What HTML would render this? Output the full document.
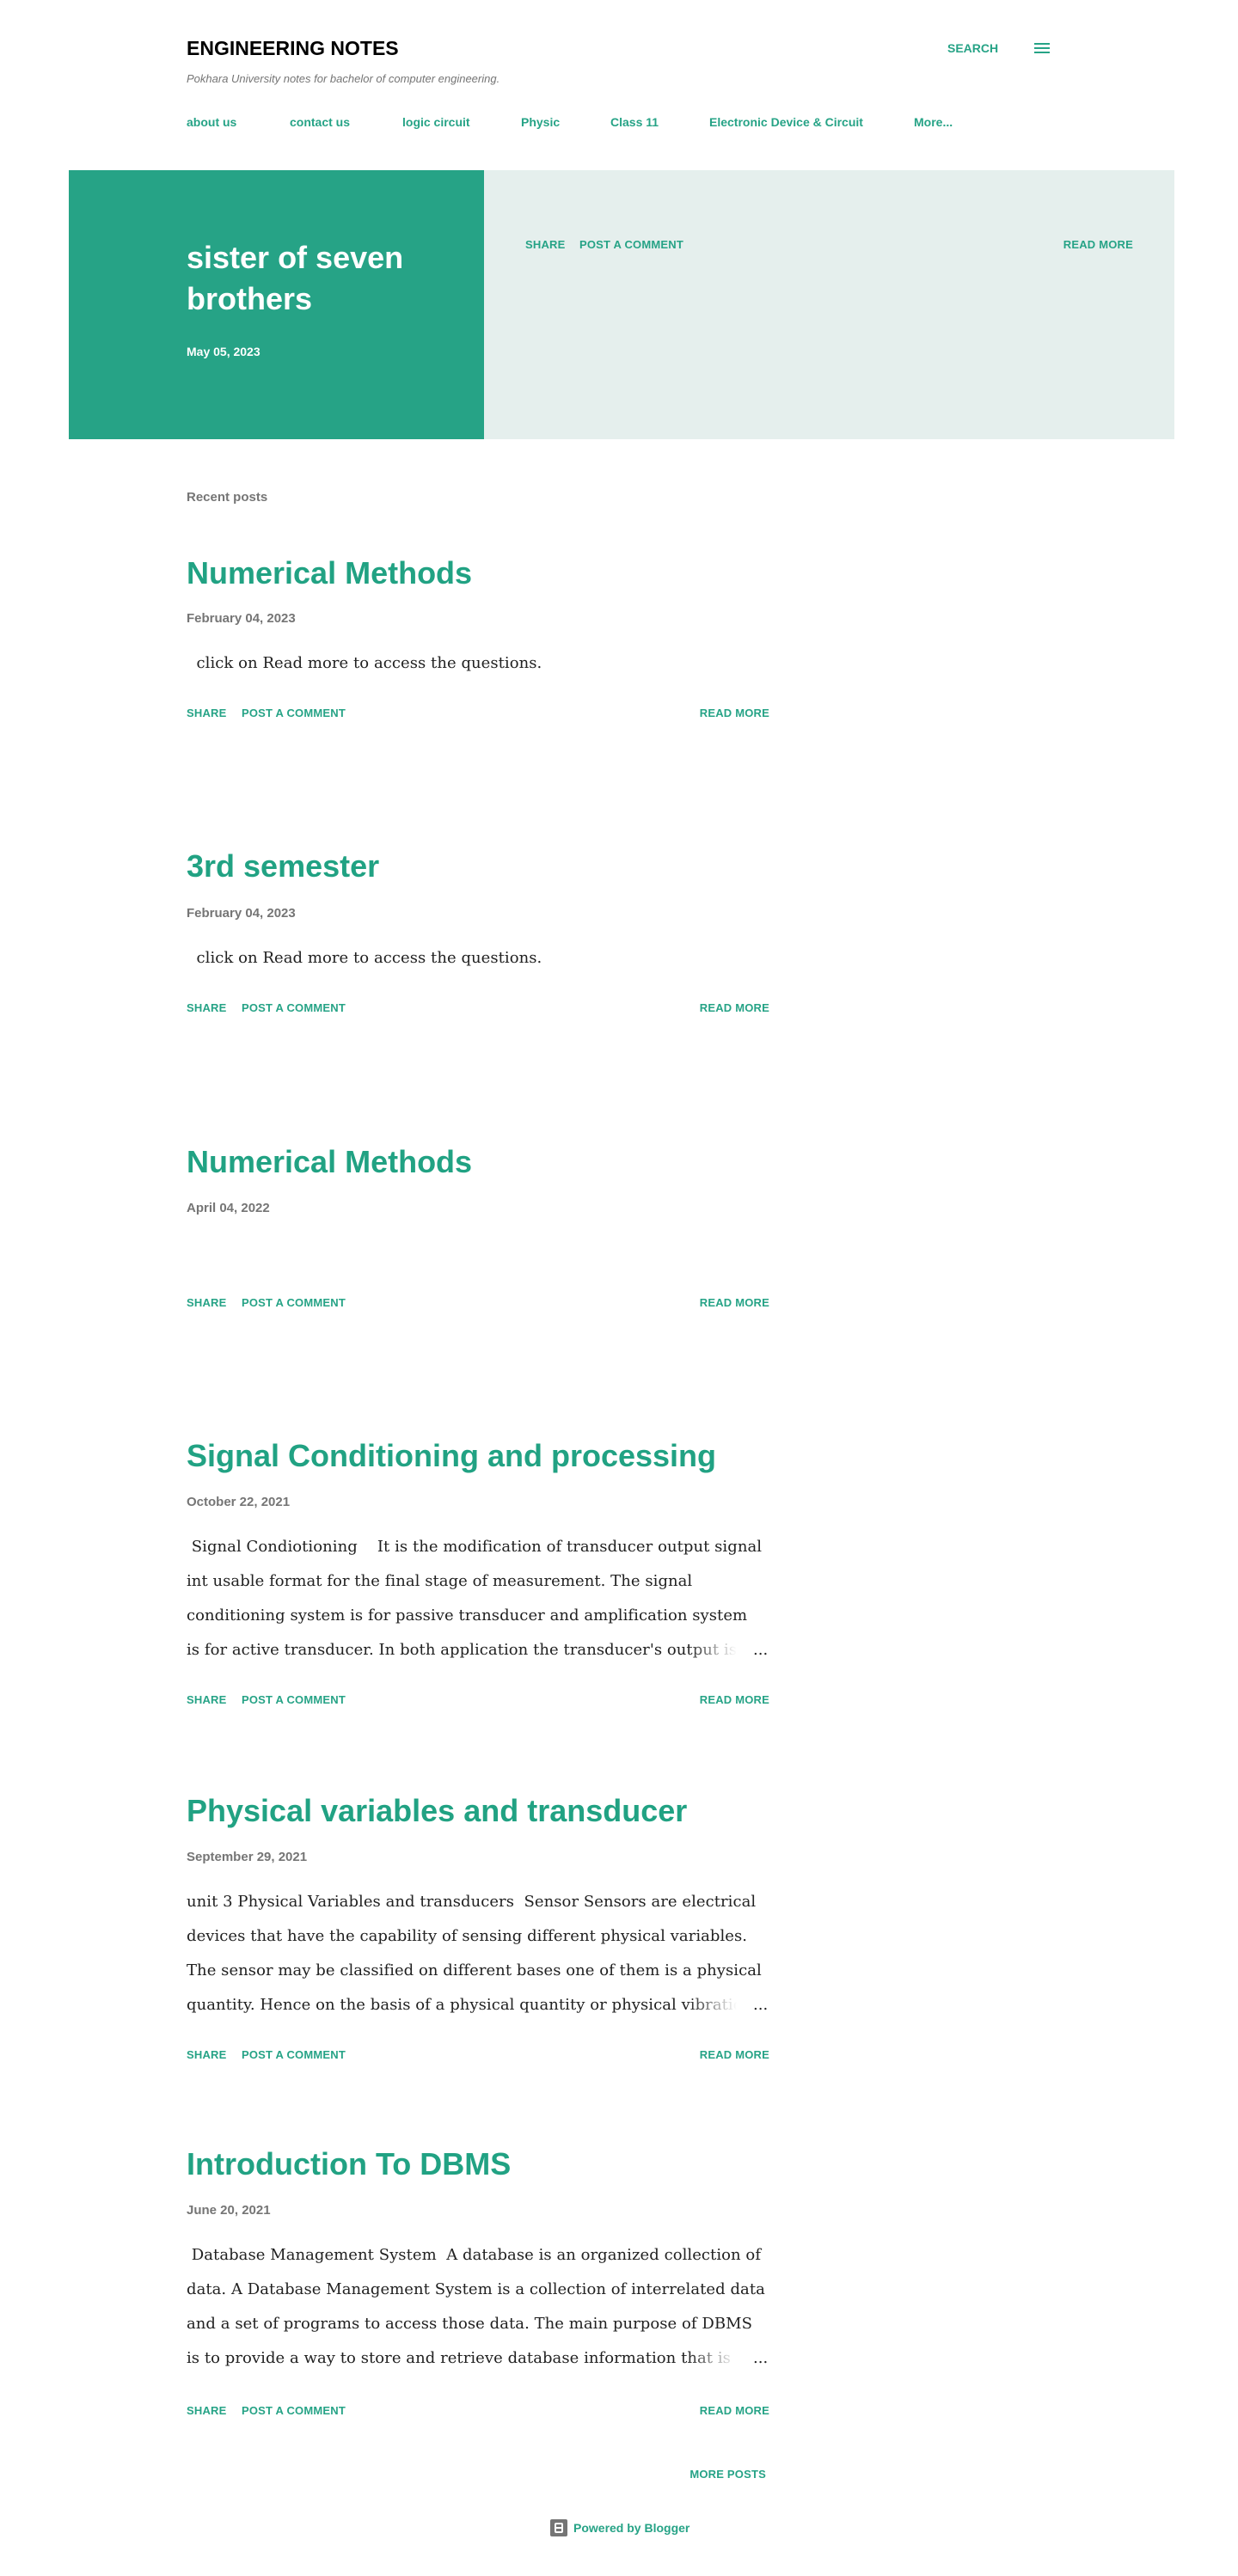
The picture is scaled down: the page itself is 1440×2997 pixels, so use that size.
<!DOCTYPE html>
<html><head><meta charset="utf-8"><style>
*{margin:0;padding:0;box-sizing:border-box}
body{width:1440px;height:2997px;position:relative;background:#fff;font-family:"Liberation Sans",sans-serif;overflow:hidden}
.a{position:absolute;white-space:nowrap}
.g{color:#26a386}
.act{font-size:13px;font-weight:bold;color:#26a386;line-height:20px;letter-spacing:.2px}
.pt{font-size:36px;font-weight:bold;color:#21a283;line-height:44px;left:217px}
.dt{font-size:15px;font-weight:bold;color:#757575;line-height:20px;left:217px}
.sn{font-family:"DejaVu Serif",serif;font-size:18px;color:#212121;line-height:40px;left:217px;width:700px;overflow:hidden;letter-spacing:.05px}
.fade{background:linear-gradient(to right,rgba(255,255,255,0),#fff 60%);}
</style></head><body>

<div class="a" style="left:217px;top:40px;font-size:23px;font-weight:bold;color:#000;line-height:32px">ENGINEERING NOTES</div>
<div class="a g" style="left:1102px;top:46px;font-size:14px;font-weight:bold;line-height:20px">SEARCH</div>
<div class="a" style="left:1203px;top:50px;width:18px;height:2px;background:#26a386;box-shadow:0 5px 0 #26a386,0 10px 0 #26a386"></div>
<div class="a" style="left:217px;top:83px;font-size:13px;font-style:italic;color:#757575;line-height:18px">Pokhara University notes for bachelor of computer engineering.</div>

<div class="a g" style="left:217px;top:132px;font-size:14px;font-weight:bold;line-height:20px">about us</div>
<div class="a g" style="left:337px;top:132px;font-size:14px;font-weight:bold;line-height:20px">contact us</div>
<div class="a g" style="left:468px;top:132px;font-size:14px;font-weight:bold;line-height:20px">logic circuit</div>
<div class="a g" style="left:606px;top:132px;font-size:14px;font-weight:bold;line-height:20px">Physic</div>
<div class="a g" style="left:710px;top:132px;font-size:14px;font-weight:bold;line-height:20px">Class 11</div>
<div class="a g" style="left:825px;top:132px;font-size:14px;font-weight:bold;line-height:20px">Electronic Device &amp; Circuit</div>
<div class="a g" style="left:1063px;top:132px;font-size:14px;font-weight:bold;line-height:20px">More...</div>

<div class="a" style="left:80px;top:198px;width:483px;height:313px;background:#26a386"></div>
<div class="a" style="left:563px;top:198px;width:803px;height:313px;background:#e5efed"></div>
<div class="a" style="left:217px;top:276px;font-size:36px;font-weight:bold;color:#fff;line-height:48px;white-space:normal;width:300px">sister of seven brothers</div>
<div class="a" style="left:217px;top:400px;font-size:14px;font-weight:bold;color:#fff;line-height:18px">May 05, 2023</div>
<div class="a act" style="left:611px;top:275px">SHARE</div>
<div class="a act" style="left:674px;top:275px">POST A COMMENT</div>
<div class="a act" style="right:122px;top:275px">READ MORE</div>

<div class="a" style="left:217px;top:569px;font-size:15px;font-weight:bold;color:#757575;line-height:20px">Recent posts</div>

<div class="a pt" style="top:645px">Numerical Methods</div>
<div class="a dt" style="top:710px">February 04, 2023</div>
<div class="a sn" style="top:752px">&nbsp; click on Read more to access the questions.</div>
<div class="a act" style="left:217px;top:820px">SHARE</div>
<div class="a act" style="left:281px;top:820px">POST A COMMENT</div>
<div class="a act" style="right:545px;top:820px">READ MORE</div>

<div class="a pt" style="top:986px">3rd semester</div>
<div class="a dt" style="top:1053px">February 04, 2023</div>
<div class="a sn" style="top:1095px">&nbsp; click on Read more to access the questions.</div>
<div class="a act" style="left:217px;top:1163px">SHARE</div>
<div class="a act" style="left:281px;top:1163px">POST A COMMENT</div>
<div class="a act" style="right:545px;top:1163px">READ MORE</div>

<div class="a pt" style="top:1330px">Numerical Methods</div>
<div class="a dt" style="top:1396px">April 04, 2022</div>
<div class="a act" style="left:217px;top:1506px">SHARE</div>
<div class="a act" style="left:281px;top:1506px">POST A COMMENT</div>
<div class="a act" style="right:545px;top:1506px">READ MORE</div>

<div class="a pt" style="top:1672px">Signal Conditioning and processing</div>
<div class="a dt" style="top:1738px">October 22, 2021</div>
<div class="a sn" style="top:1780px">&nbsp;Signal Condiotioning &nbsp;&nbsp; It is the modification of transducer output signal</div>
<div class="a sn" style="top:1820px">int usable format for the final stage of measurement. The signal</div>
<div class="a sn" style="top:1860px">conditioning system is for passive transducer and amplification system</div>
<div class="a sn" style="top:1900px;width:660px">is for active transducer. In both application the transducer's output is</div>
<div class="a fade" style="left:800px;top:1905px;width:95px;height:32px"></div>
<div class="a sn" style="top:1900px;left:876px;width:30px">...</div>
<div class="a act" style="left:217px;top:1968px">SHARE</div>
<div class="a act" style="left:281px;top:1968px">POST A COMMENT</div>
<div class="a act" style="right:545px;top:1968px">READ MORE</div>

<div class="a pt" style="top:2085px">Physical variables and transducer</div>
<div class="a dt" style="top:2151px">September 29, 2021</div>
<div class="a sn" style="top:2193px">unit 3 Physical Variables and transducers &nbsp;Sensor Sensors are electrical</div>
<div class="a sn" style="top:2233px">devices that have the capability of sensing different physical variables.</div>
<div class="a sn" style="top:2273px">The sensor may be classified on different bases one of them is a physical</div>
<div class="a sn" style="top:2313px;width:660px">quantity. Hence on the basis of a physical quantity or physical vibration</div>
<div class="a fade" style="left:800px;top:2318px;width:95px;height:32px"></div>
<div class="a sn" style="top:2313px;left:876px;width:30px">...</div>
<div class="a act" style="left:217px;top:2381px">SHARE</div>
<div class="a act" style="left:281px;top:2381px">POST A COMMENT</div>
<div class="a act" style="right:545px;top:2381px">READ MORE</div>

<div class="a pt" style="top:2496px">Introduction To DBMS</div>
<div class="a dt" style="top:2562px">June 20, 2021</div>
<div class="a sn" style="top:2604px">&nbsp;Database Management System &nbsp;A database is an organized collection of</div>
<div class="a sn" style="top:2644px">data. A Database Management System is a collection of interrelated data</div>
<div class="a sn" style="top:2684px">and a set of programs to access those data. The main purpose of DBMS</div>
<div class="a sn" style="top:2724px;width:660px">is to provide a way to store and retrieve database information that is</div>
<div class="a fade" style="left:800px;top:2729px;width:95px;height:32px"></div>
<div class="a sn" style="top:2724px;left:876px;width:30px">...</div>
<div class="a act" style="left:217px;top:2795px">SHARE</div>
<div class="a act" style="left:281px;top:2795px">POST A COMMENT</div>
<div class="a act" style="right:545px;top:2795px">READ MORE</div>

<div class="a act" style="right:549px;top:2869px">MORE POSTS</div>

<div class="a" style="left:640px;top:2931px;width:20px;height:20px;background:#757575;border-radius:2px"></div>
<div class="a" style="left:645px;top:2935px;width:10px;height:12px;border:2px solid #fff;border-radius:2px"></div>
<div class="a" style="left:647px;top:2940px;width:6px;height:2px;background:#fff"></div>
<div class="a g" style="left:667px;top:2931px;font-size:14px;font-weight:bold;line-height:20px">Powered by Blogger</div>
</body></html>
